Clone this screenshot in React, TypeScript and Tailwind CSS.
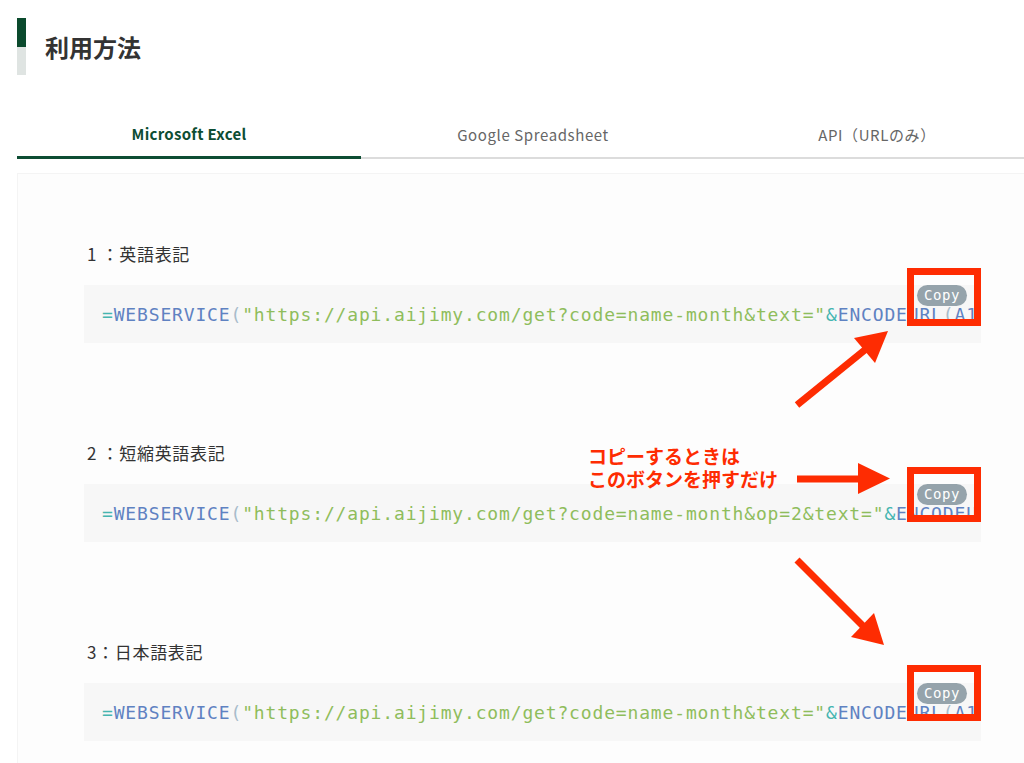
import React from "react";

const RED = "#fe2c02";

function CodeLine({ middle }: { middle: string }) {
  return (
    <>
      <span className="text-[#45b5b0]">=</span>
      <span className="text-[#5f82c2]">WEBSERVICE</span>
      <span className="text-[#a8bccb]">(</span>
      <span className="text-[#8fbd5c]">"https://api.aijimy.com/get?code=name-month{middle}&amp;text="</span>
      <span className="text-[#45b5b0]">&amp;</span>
      <span className="text-[#5f82c2]">ENCODEURL</span>
      <span className="text-[#a8bccb]">(</span>
      <span className="text-[#5f82c2]">A1</span>
      <span className="text-[#a8bccb]">))</span>
    </>
  );
}

function Section({ label, middle, className }: { label: string; middle: string; className?: string }) {
  return (
    <div className={className}>
      <div className="h-[26px] flex items-center pl-[3px] text-[17px] tracking-[0.04em] text-[#333]">{label}</div>
      <div className="relative mt-[18px] h-[58px] bg-[#f7f7f7] flex items-center pl-[18px] overflow-hidden whitespace-nowrap">
        <span className="font-['DejaVu_Sans_Mono',monospace] text-[18px] tracking-[0.84px]">
          <CodeLine middle={middle} />
        </span>
        <div className="absolute top-0 right-[14px] w-[50px] h-[21px] rounded-full bg-[#95a3ab] flex items-center justify-center text-white font-['DejaVu_Sans_Mono',monospace] text-[14px] tracking-[0.6px]">
          Copy
        </div>
      </div>
    </div>
  );
}

export default function App() {
  return (
    <div className="relative w-[1024px] h-[763px] bg-white overflow-hidden font-['Noto_Sans_CJK_JP','Noto_Sans',sans-serif]">
      <div className="w-[1032px] ml-[17px] pt-[18px]">
        <div className="flex items-center">
          <div className="w-[9px] h-[57px] flex flex-col">
            <div className="h-[29px] bg-[#0b4a2d]" />
            <div className="flex-1 bg-[#dfe4e2]" />
          </div>
          <h2 className="ml-[19px] text-[24px] font-bold text-[#333] leading-none">利用方法</h2>
        </div>

        <div className="flex mt-[38px]">
          <div className="w-[344px] h-[46px] flex items-center justify-center border-b-[3px] border-[#0d4d33] text-[15px] font-bold tracking-[0.02em] text-[#0d4d33]">
            Microsoft Excel
          </div>
          <div className="w-[344px] h-[46px] flex items-center justify-center border-b-2 border-[#dcdcdc] text-[15px] tracking-[0.04em] text-[#666]">
            Google Spreadsheet
          </div>
          <div className="w-[344px] h-[46px] flex items-center justify-center border-b-2 border-[#dcdcdc] text-[15px] tracking-[0.04em] text-[#666]">
            API（URLのみ）
          </div>
        </div>

        <div className="mt-[14px] bg-[#fdfdfd] border border-[#f4f4f4] pl-[66px] pr-[67px] pt-[67px] pb-[40px]">
          <Section label="1 ：英語表記" middle="" />
          <Section className="mt-[97px]" label="2 ：短縮英語表記" middle="&op=2" />
          <Section className="mt-[97px]" label="3：日本語表記" middle="" />
        </div>
      </div>

      <div className="absolute left-[588px] top-[444px] text-[19px] leading-[23px] font-bold text-[#fe2c02]">
        <div>コピーするときは</div>
        <div>このボタンを押すだけ</div>
      </div>

      <svg className="absolute left-0 top-0 pointer-events-none" width="1024" height="763" viewBox="0 0 1024 763">
        <g fill="none" stroke={RED} strokeWidth="7">
          <rect x="910.5" y="271.5" width="67" height="51" />
          <rect x="910.5" y="470.5" width="67" height="48" />
          <rect x="910.5" y="668.5" width="67" height="49" />
        </g>
        <g stroke={RED} strokeWidth="7" strokeLinecap="butt">
          <line x1="797" y1="405" x2="866" y2="349" />
          <line x1="797" y1="479" x2="860" y2="479" />
          <line x1="797" y1="560" x2="864" y2="627" />
        </g>
        <g fill={RED}>
          <polygon points="888,331 854,338 875,363" />
          <polygon points="890,478.5 858,463 858,494" />
          <polygon points="884,645 851,637 874,613" />
        </g>
      </svg>
    </div>
  );
}
